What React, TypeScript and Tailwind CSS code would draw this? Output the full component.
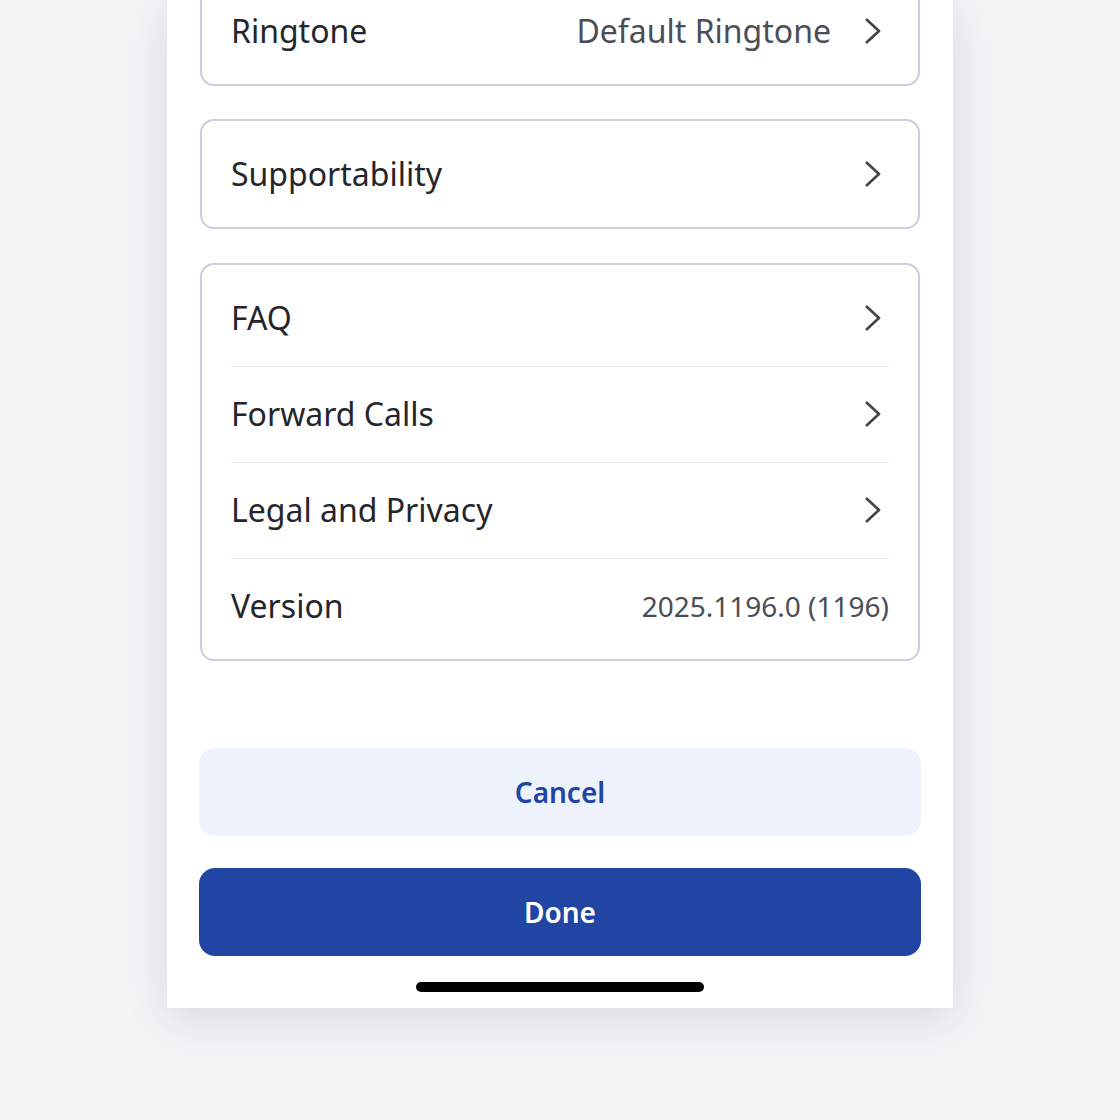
import type { ReactNode } from 'react';

const FONT = { fontFamily: '"Noto Sans", "Open Sans", Arial, sans-serif' };

function Chevron() {
  return (
    <svg width="16" height="26" viewBox="0 0 16 26" fill="none" className="mr-[8px] shrink-0">
      <path d="M1.8 1.8 L14 13 L1.8 24.2" stroke="#44464d" strokeWidth="2.7" strokeLinecap="round" strokeLinejoin="round" />
    </svg>
  );
}

interface RowProps {
  label: string;
  value?: string;
  small?: boolean;
  chevron?: boolean;
  divider?: boolean;
}

function Row({ label, value, small, chevron = true, divider }: RowProps) {
  return (
    <div className={`flex items-center ${divider ? 'border-t border-[#e6e9ef] h-[96px]' : 'h-[95px]'}`}>
      <span className="text-[32px] text-[#24262b] leading-none">{label}</span>
      <div className="ml-auto flex items-center gap-[34px]">
        {value && (
          <span className={`${small ? 'text-[28px]' : 'text-[32px]'} text-[#4b4e56] leading-none`}>{value}</span>
        )}
        {chevron && <Chevron />}
      </div>
    </div>
  );
}

function Card({ children, className = '' }: { children: ReactNode; className?: string }) {
  return (
    <div className={`mx-px rounded-[14px] border-2 border-[#c9cfdd] bg-white px-[29px] py-[5.5px] ${className}`}>
      {children}
    </div>
  );
}

export default function App() {
  return (
    <div className="w-full h-[1120px] bg-[#f3f4f8] flex justify-center overflow-hidden" style={FONT}>
      <div className="w-[786px] h-[1008px] bg-white shadow-[0_10px_40px_rgba(25,35,70,0.13)] px-[32px] flex flex-col">
        <Card className="-mt-[24px]">
          <Row label="Ringtone" value="Default Ringtone" />
        </Card>

        <Card className="mt-[33px]">
          <Row label="Supportability" />
        </Card>

        <Card className="mt-[34px]">
          <Row label="FAQ" />
          <Row label="Forward Calls" divider />
          <Row label="Legal and Privacy" divider />
          <Row label="Version" value="2025.1196.0 (1196)" small chevron={false} divider />
        </Card>

        <button className="mt-[87px] h-[88px] w-full rounded-[16px] bg-[#eef2fd] text-[28px] font-semibold text-[#2245a3]">
          Cancel
        </button>
        <button className="mt-[32px] h-[88px] w-full rounded-[16px] bg-[#2145a2] text-[28px] font-semibold text-white">
          Done
        </button>

        <div className="mt-[26px] mx-auto h-[10px] w-[288px] rounded-full bg-black" />
      </div>
    </div>
  );
}
